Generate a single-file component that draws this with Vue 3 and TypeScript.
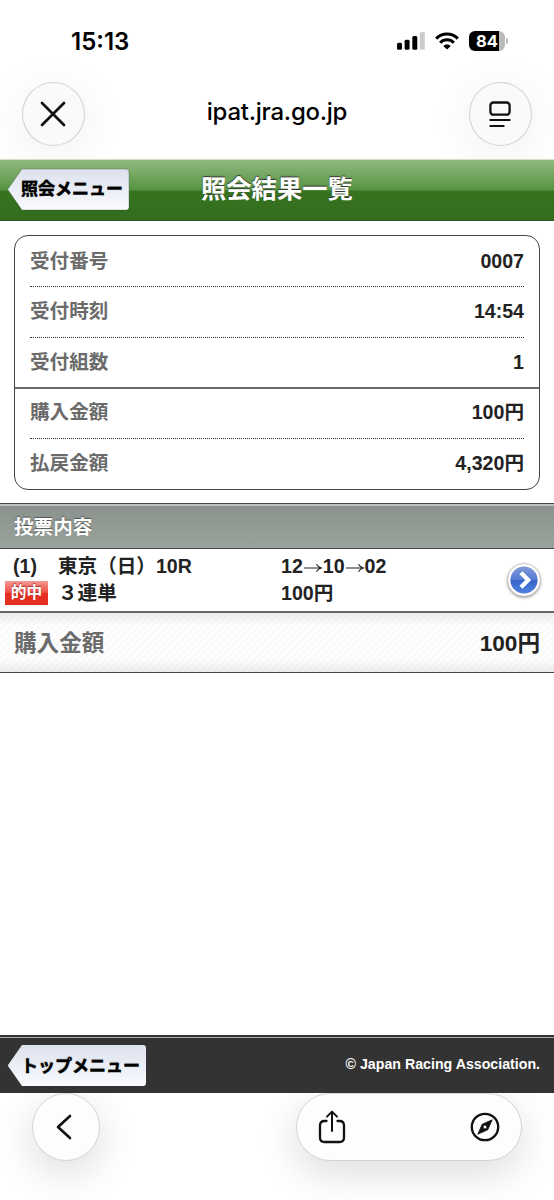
<script setup lang="ts">
interface Row {
  label: string
  value: string
}

const receipt: Row[] = [
  { label: '受付番号', value: '0007' },
  { label: '受付時刻', value: '14:54' },
  { label: '受付組数', value: '1' },
]
const amounts: Row[] = [
  { label: '購入金額', value: '100円' },
  { label: '払戻金額', value: '4,320円' },
]
const picks: string[] = ['12', '10', '02']
</script>

<template>
  <div class="screen">
    <div class="status">
      <span class="clock">15:13</span>
      <div class="indicators">
        <svg class="signal" width="28" height="18" viewBox="0 0 28 18">
          <rect x="0" y="10.7" width="5" height="7" rx="1.5" />
          <rect x="7.6" y="7.7" width="5" height="10" rx="1.5" />
          <rect x="15.3" y="4" width="5" height="13.7" rx="1.5" />
          <rect x="22.8" y="0" width="5" height="17.7" rx="1.5" fill="#ccc" />
        </svg>
        <svg class="wifi" width="24" height="18" viewBox="0 0 24 18">
          <g fill="none" stroke="#000" stroke-width="3">
            <path d="M1.2 6.6 C7.2 .4 16.8 .4 22.8 6.6" />
            <path d="M5.1 10.7 C9 6.8 15 6.8 18.9 10.7" />
          </g>
          <path d="M8.3 13.9 C10.3 11.9 13.7 11.9 15.7 13.9 L12.6 17 Q12 17.6 11.4 17Z" />
        </svg>
        <div class="battery"><span>84</span></div>
        <i class="nub"></i>
      </div>
    </div>

    <div class="address">
      <div class="round close">
        <svg width="26" height="26" viewBox="0 0 26 26">
          <path d="M2 2 24 24 M24 2 2 24" fill="none" stroke="#111" stroke-width="2.7" stroke-linecap="round" />
        </svg>
      </div>
      <span class="host">ipat.jra.go.jp</span>
      <div class="round">
        <svg width="22" height="27" viewBox="0 0 22 27" fill="none" stroke="#111" stroke-width="2.3" stroke-linecap="round">
          <rect x="1.4" y="1.5" width="19.2" height="12.2" rx="3" />
          <path d="M1.3 19H20.7 M1.3 25H14.7" stroke-width="2" />
        </svg>
      </div>
    </div>

    <header class="titlebar">
      <div class="back">
        <svg class="tag" width="124" height="44" viewBox="0 0 124 44">
          <defs>
            <linearGradient id="tagA" x2="0" y2="1">
              <stop offset="0" stop-color="#dce1ed" />
              <stop offset="1" stop-color="#fafbff" />
            </linearGradient>
          </defs>
          <path d="M15 1H119Q122 1 122 4V39Q122 42 119 42H15L.7 21.5Z" fill="url(#tagA)" stroke="#334a2b" stroke-opacity=".4" stroke-width=".8" />
        </svg>
        <span>照会メニュー</span>
      </div>
      <h1>照会結果一覧</h1>
    </header>

    <main>
      <section class="card">
        <dl v-for="(group, g) in [receipt, amounts]" :key="g" class="group">
          <div v-for="row in group" :key="row.label" class="line">
            <dt>{{ row.label }}</dt>
            <dd>{{ row.value }}</dd>
          </div>
        </dl>
      </section>

      <h2>投票内容</h2>

      <section class="bet">
        <div class="marks">
          <span class="no">(1)</span>
          <span class="hit">的中</span>
        </div>
        <div class="race">
          <span>東京（日）10R</span>
          <span>３連単</span>
        </div>
        <div class="pick">
          <span><template v-for="(n, i) in picks" :key="i"><svg v-if="i" class="arrow" width="20" height="12" viewBox="0 0 20 12"><path d="M1 7H18 M13.5 3.2Q15 6 18.3 7Q15 8 13.5 10.8" fill="none" stroke="#222" stroke-width="1.15" /></svg>{{ n }}</template></span>
          <span>100円</span>
        </div>
        <svg class="go" width="38" height="40" viewBox="0 0 38 40">
          <defs>
            <linearGradient id="blue" x2="0" y2="1">
              <stop offset="0" stop-color="#8199d8" />
              <stop offset=".48" stop-color="#557bd3" />
              <stop offset=".52" stop-color="#3565cc" />
              <stop offset="1" stop-color="#5181df" />
            </linearGradient>
          </defs>
          <circle cx="19" cy="19" r="16.3" fill="#fff" stroke="#bbb" stroke-width=".6" />
          <circle cx="19" cy="19" r="13.6" fill="url(#blue)" />
          <path d="M16 11.8 23.2 19 16 26.2" fill="none" stroke="#fff" stroke-width="4.2" />
        </svg>
      </section>

      <section class="total">
        <span class="name">購入金額</span>
        <span class="sum">100円</span>
      </section>
    </main>

    <footer class="foot">
      <div class="back wide">
        <svg class="tag" width="141" height="44" viewBox="0 0 141 44">
          <defs>
            <linearGradient id="tagB" x2="0" y2="1">
              <stop offset="0" stop-color="#dce1ed" />
              <stop offset="1" stop-color="#fafbff" />
            </linearGradient>
          </defs>
          <path d="M15 1H136Q139 1 139 4V39Q139 42 136 42H15L.7 21.5Z" fill="url(#tagB)" />
        </svg>
        <span>トップメニュー</span>
      </div>
      <small>© Japan Racing Association.</small>
    </footer>

    <nav class="toolbar">
      <div class="prev">
        <svg width="16" height="26" viewBox="0 0 16 26">
          <path d="M14 2 2 13 14 24" fill="none" stroke="#111" stroke-width="2.6" stroke-linecap="round" stroke-linejoin="round" />
        </svg>
      </div>
      <div class="pill">
        <svg width="28" height="34" viewBox="0 0 28 34" fill="none" stroke="#111" stroke-width="2.3" stroke-linecap="round" stroke-linejoin="round">
          <path d="M8.5 11H6.5Q2 11 2 15.5V27.5Q2 32 6.5 32H21.5Q26 32 26 27.5V15.5Q26 11 21.5 11H19.5" />
          <path d="M14 21V2 M9 6.6 14 1.6 19 6.6" stroke-width="2" />
        </svg>
        <svg width="28" height="30" viewBox="0 0 28 30" fill="none" stroke="#fff" stroke-width="2.4" stroke-linecap="round">
          <path d="M14 5A11 11 0 1 0 25 16 M13 1 17 5 13 9" />
        </svg>
        <svg width="30" height="30" viewBox="0 0 30 30">
          <circle cx="15" cy="15" r="13.2" fill="none" stroke="#111" stroke-width="2.3" />
          <path fill-rule="evenodd" d="M22.2 7.8 17.8 17.8 7.8 22.2 12.2 12.2ZM15 13.1A1.9 1.9 0 1 0 15 16.9A1.9 1.9 0 1 0 15 13.1Z" fill="#111" stroke="#111" stroke-width=".8" stroke-linejoin="round" />
        </svg>
      </div>
    </nav>
  </div>
</template>

<style>
body {
  margin: 0;
  background: #fff;
}
</style>

<style scoped>
* {
  box-sizing: border-box;
}
.screen {
  width: 554px;
  height: 1200px;
  display: flex;
  flex-direction: column;
  overflow: hidden;
  background: #fff;
  color: #222;
  font-family: 'Liberation Sans', 'Noto Sans CJK JP', sans-serif;
  font-weight: 700;
  font-size: 19.6px;
}
.status {
  height: 82px;
  flex: none;
  display: flex;
  justify-content: space-between;
  padding: 27px 46px 0 71px;
}
.clock {
  font: 600 24px/30px Inter, sans-serif;
  color: #000;
}
.indicators {
  display: flex;
  align-items: flex-start;
  padding-top: 5px;
}
.wifi {
  margin-left: 10px;
}
.battery {
  width: 36px;
  height: 20px;
  margin: -1px 0 0 10px;
  border-radius: 6px;
  background: linear-gradient(90deg, #000 30px, #bbb 30px);
  color: #fff;
  font: 700 16.5px/20px Inter, sans-serif;
  text-align: center;
}
.nub {
  width: 2px;
  height: 6px;
  margin: 6px 0 0 1px;
  border-radius: 0 3px 3px 0;
  background: #bbb;
}
.address {
  height: 77px;
  flex: none;
  display: flex;
  justify-content: space-between;
  padding: 0 22px;
}
.round {
  width: 63px;
  height: 64px;
  display: flex;
  align-items: center;
  justify-content: center;
  border: 1px solid #d2d2d2;
  border-radius: 50%;
  background: #fafafa;
  box-shadow: 0 8px 48px rgba(0, 0, 0, 0.07);
}
.close {
  padding-right: 1px;
}
.host {
  font: 500 24px/60px Inter, sans-serif;
  letter-spacing: -0.25px;
  color: #000;
}
.titlebar {
  position: relative;
  height: 62px;
  flex: none;
  display: flex;
  padding: 8px 0 0 7px;
  border-top: 1px solid #cfdfc8;
  border-bottom: 1px solid #365129;
  background: linear-gradient(#8fb97e 0, #89b477 4px, #569342 30px, #367420 31px, #326c1d 100%);
}
.back {
  display: grid;
  width: 124px;
  height: 44px;
  flex: none;
}
.back > * {
  grid-area: 1 / 1;
}
.back.wide {
  width: 141px;
}
.back span {
  padding-left: 14px;
  color: #000;
  font-size: 17px;
  line-height: 43px;
  white-space: nowrap;
  -webkit-text-stroke: 0.5px #000;
  text-shadow: 0 -1px 1px #7778;
}
.back.wide span {
  line-height: 45px;
}
.titlebar h1 {
  margin: 0 0 0 70px;
  color: #fff;
  font-size: 25.3px;
  line-height: 43px;
  text-shadow: 0 -1px 1px #333;
}
main {
  display: flex;
  flex: none;
  flex-direction: column;
  height: 814px;
}
.card {
  flex: none;
  height: 255px;
  margin: 14px 14px 13px;
  border: 1.6px solid #444;
  border-radius: 14px;
}
.group {
  margin: 0;
  padding: 0 15px;
}
.group + .group {
  border-top: 2px solid #6a6a6a;
}
.line {
  display: flex;
  justify-content: space-between;
  height: 50px;
  line-height: 50px;
}
.line + .line {
  height: 51px;
  line-height: 49px;
  border-top: 1px dotted #333;
}
.line + .line:last-child {
  height: 50px;
}
.group + .group .line:first-child {
  height: 49px;
  line-height: 47px;
}
dt {
  color: #6b6b6b;
}
dd {
  margin: 0;
}
h2 {
  flex: none;
  height: 46px;
  margin: 0;
  padding-left: 14px;
  border-top: 1px solid #444;
  border-bottom: 1px solid #444;
  background: linear-gradient(#bcc3be 0, #bcc3be 2px, #8b928d 2px, #9aa39d 100%);
  color: #fff;
  font-size: 19.6px;
  line-height: 46px;
  text-shadow: 0 -1px 1px #555;
}
.bet {
  flex: none;
  height: 62px;
  display: flex;
  padding: 4px 10px 0 5px;
  line-height: 27px;
}
.marks,
.race,
.pick {
  display: flex;
  flex-direction: column;
}
.marks {
  width: 53px;
}
.no {
  padding-left: 8px;
}
.hit {
  width: 43px;
  height: 24px;
  margin-top: 1px;
  background: linear-gradient(#f49a94, #ee4a42 50%, #e62e22 52%, #e5301f);
  color: #fff;
  font-size: 15.7px;
  line-height: 23px;
  text-align: center;
  text-shadow: 0 -1px 1px #a33;
}
.race {
  width: 223px;
}
.go {
  margin: 8px 1px 0 auto;
  filter: drop-shadow(0 1px 1.5px #0007);
}
.total {
  flex: none;
  height: 62px;
  display: flex;
  justify-content: space-between;
  padding: 0 14px;
  border-top: 2px solid #666;
  border-bottom: 1.5px solid #444;
  background:
    linear-gradient(#0001, #0000 12px, #0000 46px, #0001),
    repeating-linear-gradient(135deg, #fff 0, #f8f8f8 2.5px, #fff 5px);
  font-size: 22.6px;
  line-height: 61px;
}
.name {
  color: #6b6b6b;
}
.foot {
  flex: none;
  height: 58px;
  display: flex;
  justify-content: space-between;
  padding: 8px 14px 0 7px;
  border-top: 1px solid #333;
  background: linear-gradient(#333 1px, #aaa 1px, #aaa 2px, #333 2px);
}
small {
  color: #fff;
  font-size: 14.2px;
  line-height: 41px;
}
.toolbar {
  display: flex;
  justify-content: space-between;
  height: 107px;
  padding: 0 32px;
  clip-path: inset(0);
}
.prev,
.pill {
  height: 68px;
  display: flex;
  align-items: center;
  border: 1px solid #d4d4d4;
  border-radius: 34px;
  background: #fdfdfd;
  box-shadow: 0 12px 40px rgba(0, 0, 0, 0.14);
}
.prev {
  width: 68px;
  justify-content: center;
  padding-right: 4px;
}
.pill {
  width: 226px;
  justify-content: space-between;
  padding: 0 21px;
}
</style>
